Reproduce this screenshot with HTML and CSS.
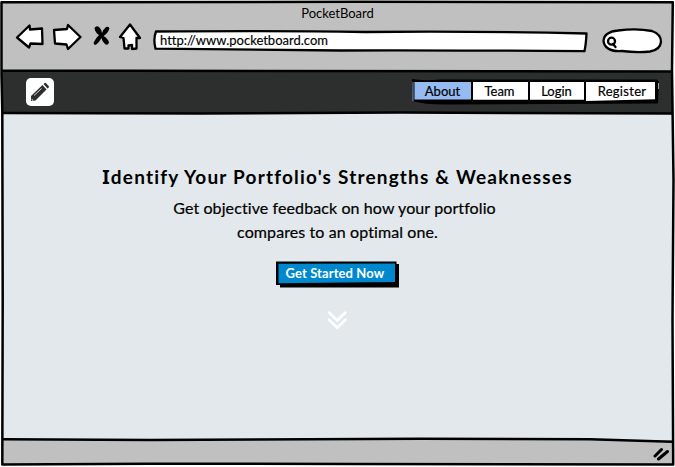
FILE: index.html
```html
<!DOCTYPE html>
<html lang="en">
<head>
<meta charset="utf-8">
<title>PocketBoard</title>
<link rel="stylesheet" href="styles.css">
</head>
<body>
<div class="window">
  <header class="chrome">
    <div class="window-title"><span>PocketBoard</span></div>
    <div class="toolbar">
      <svg class="controls" width="130" height="34" viewBox="14 20 130 34">
        <g fill="#fff" stroke="#000" stroke-width="2.3" stroke-linejoin="round" stroke-linecap="round">
          <path d="M17 37.500L29.500 25.500L30 29.500L42 28.500L42.500 44L30.500 43.500L29 47.500Z"/>
          <path d="M54 30L67 29L68 25L80.500 37L68 49L66.500 44.500L55 43.500Z"/>
          <path d="M130 24.500L120 37L123.500 38L124.500 48.500L128.500 48.500V45.500L132 45V49L136.500 48.500L136.500 38L140 38Z"/>
        </g>
        <g fill="#000">
          <path d="M94.500 28Q96.500 25 99.500 27.500Q101.500 29.500 102 33Q103.500 29 106 27Q109 26 109.500 28.500Q108 33 103.500 36Q108 38.500 109 42.500Q107.500 46.500 104.500 43.500Q102 41 101.500 38Q98 44 95 45Q92.500 43.500 94.500 41Q96 38 99 35Q95 32.500 94.500 28Z"/>
        </g>
      </svg>
      <div class="address">
        <svg class="shape" width="436" height="24" viewBox="152 29 436 24"><path d="M156 31.500Q280 30.500 365 32Q480 31 586.500 33.500Q586 44 584.500 51.200Q420 50 340 50.500L155.500 48.700Q153 39 156 31.500Z"/></svg>
        <span class="url">http://www.pocketboard.com</span>
      </div>
      <svg class="search" width="62" height="28" viewBox="602 27 62 28">
        <path class="pill" d="M603.500 41Q604 32 618 30.500Q637 28 652 31Q661 34 661 42Q660 50 650 51.500Q637 53 622 51Q605 52 603.500 41Z"/>
        <circle cx="611.500" cy="41.200" r="3.500"/><path d="M613 44L615.500 47"/>
      </svg>
    </div>
  </header>
  <nav class="navbar">
    <div class="logo">
      <svg width="20" height="20" viewBox="30 83 20 20" fill="#2d2f2e"><path d="M31 97L42.500 86L46.500 90.500L35.500 101.500L31 102Z"/><path d="M43.500 85L45 83.700Q46 83.500 49 87.500L48.500 89L47.500 89.500Z"/><path d="M34 96.500L41.500 89.500" stroke="#fff" stroke-width=".8"/><path d="M31.500 99.500L33.500 101.500L32 101.500Z" fill="#fff"/></svg>
    </div>
    <div class="menu">
      <svg class="shape" width="250" height="28" viewBox="411 77 250 28"><path fill="#000" d="M412 79Q422 81 440 79.500L657 79.500L659 82L658 103.500L450 104.500Q425 105 413 101Z"/><path fill="#95bbf0" d="M414.500 82H471V99.500H414.500Z"/><path fill="#fff" d="M473 82H528V99.700H473ZM530 82H584V99.700H530ZM586 82H655L655 99.200L586 101Z"/><path d="M413 82V101" stroke="#95bbf0" stroke-width=".8"/><path d="M658.500 83L658.500 89" stroke="#ccc" stroke-width=".8"/></svg>
      <a class="about">About</a><a class="team">Team</a><a class="login">Login</a><a class="register">Register</a>
    </div>
  </nav>
  <main class="hero">
    <h1><span class="serif-cap">I</span>dentify Your Portfolio's Strengths &amp; Weaknesses</h1>
    <p class="line-one">Get objective feedback on how your portfolio</p>
    <p class="line-two">compares to an optimal one.</p>
    <div class="button">
      <svg class="shape" width="124" height="28" viewBox="275 260 124 28"><path d="M280 264H399V287.500H280Z"/><path d="M276 261.500L396.500 261.500V286L276 285Z"/><path fill="#0088cf" d="M278.500 263.800L395 263.500V282L278.500 283.200Z"/></svg>
      <span>Get Started Now</span>
    </div>
    <svg class="more" width="20" height="20" viewBox="327 310 20 20"><path d="M329 312.500L337.200 320.500L345.500 312.500M329 319.700L337.200 327.700L345.500 319.700"/></svg>
  </main>
  <footer class="statusbar">
    <svg width="18" height="15" viewBox="652 446 18 15"><path d="M655 456L661.500 449.500M658.500 459L667.500 451.500"/></svg>
  </footer>
  <svg class="outline" width="675" height="467" viewBox="0 0 675 467">
    <path d="M1.500 2.200L360 1.800L672.800 2.200L672 70L673.500 180L672.500 320L673.200 464.500L350 464L150 463.700L2.300 464.500L2.700 300L2.300 112L1.500 75Z"/>
    <path d="M2 70.800L130 70.800Q400 71.600 672 71.500M2 113L200 113.500L400 112.500L672 113.500M2 439.300L150 440L420 438.800L590 439.200L672 441.800"/>
  </svg>
</div>
</body>
</html>
```
FILE: styles.css
```css
* { box-sizing: border-box; }
body { margin: 0; background: #fff; color: #000; font-family: Lato, "Open Sans", sans-serif; font-variant-ligatures: none; }
.window { position: relative; width: 675px; height: 467px; padding: 2px 2px 3px; display: flex; flex-direction: column; overflow: hidden; }
.outline { position: absolute; left: 0; top: 0; pointer-events: none; fill: none; stroke: #000; stroke-width: 2.5; stroke-linejoin: round; }
.chrome { height: 69px; background: #c0c0c0; }
.window-title { height: 25px; padding-top: 2px; text-align: center; font-size: 13px; line-height: 19px; }
.toolbar { display: flex; height: 28px; }
.controls { margin: -7px 8px 0 12px; flex: none; }
.address { position: relative; width: 436px; height: 24px; margin-top: 2px; flex: none; }
.address .shape { fill: #fff; stroke: #000; stroke-width: 2.3; stroke-linejoin: round; }
.shape { position: absolute; left: 0; top: 0; }
.url { position: relative; display: inline-block; margin-left: 8px; font-size: 13px; line-height: 22px; -webkit-text-stroke: .15px #000; }
.search { margin-left: 14px; flex: none; fill: none; stroke: #000; stroke-width: 2.3; stroke-linecap: round; }
.search .pill { fill: #fff; }
.navbar { height: 42px; background: #2d2f2e; display: flex; justify-content: space-between; padding: 7px 12px 0 24px; }
.logo { width: 28px; height: 28px; border-radius: 5px; background: #fff; padding: 4px; }
.logo svg { display: block; }
.menu { position: relative; width: 250px; height: 28px; display: flex; margin-top: -1px; padding-left: 3px; font-size: 13px; line-height: 28px; -webkit-text-stroke: .2px #000; }
.menu a { position: relative; text-align: center; }
.about, .team, .login { width: 57px; }
.register { width: 74px; letter-spacing: .3px; }
.hero { height: 327px; background: #e2e8ec; display: flex; flex-direction: column; align-items: center; padding-top: 52px; }
h1 { margin: 0; font-size: 19px; line-height: 24px; letter-spacing: 1.19px; font-weight: 700; white-space: nowrap; }
.serif-cap { font-family: "Noto Sans", sans-serif; }
p { margin: 0; font-size: 16px; line-height: 24px; letter-spacing: .1px; white-space: nowrap; -webkit-text-stroke: .2px #000; }
.line-one { margin-top: 7px; margin-right: 6px; }
.button { position: relative; width: 124px; height: 28px; margin: 16px 2px 0 0; color: #fff; font-size: 13px; line-height: 27px; font-weight: 700; letter-spacing: .1px; padding-left: 11px; }
.button span { position: relative; }
.more { margin: 22px 2px 0 0; fill: none; stroke: #fff; stroke-width: 2.5; stroke-linecap: round; }
.statusbar { height: 24px; background: #c0c0c0; display: flex; justify-content: flex-end; padding: 6px 3px 0 0; }
.statusbar svg { fill: none; stroke: #000; stroke-width: 3; stroke-linecap: round; }
```
